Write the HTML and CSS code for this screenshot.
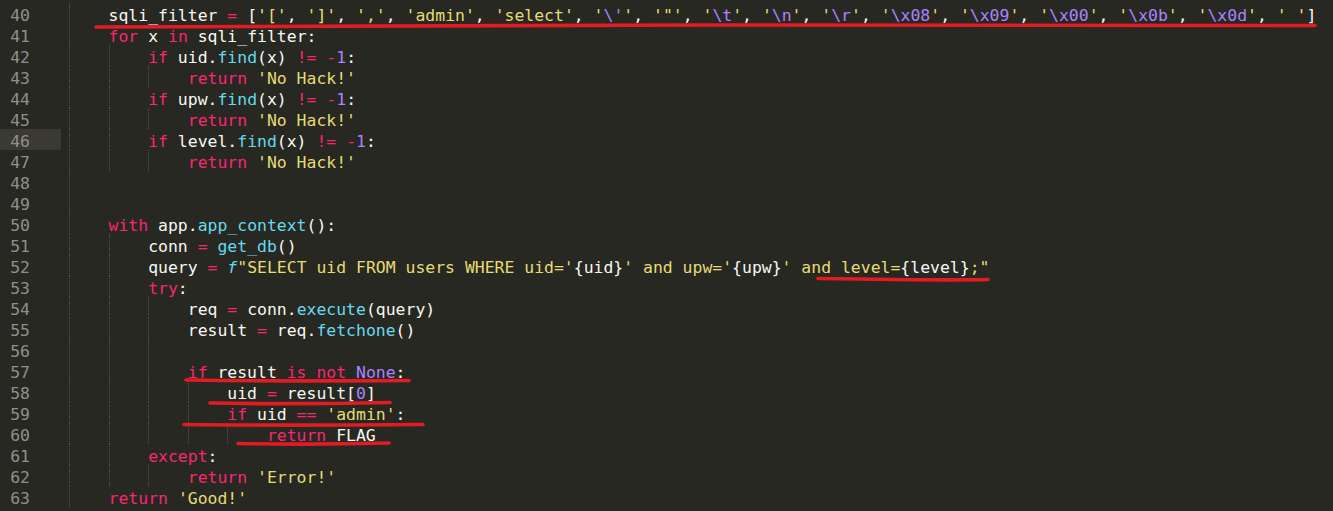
FILE: index.html
```html
<!DOCTYPE html>
<html lang="en">
<head>
<meta charset="utf-8">
<title>app.py</title>
<link rel="stylesheet" href="styles.css">
</head>
<body>
<div class="editor">
  <div class="row"><span class="ln">40</span><span class="g"></span><span class="t">sqli_filter <span class="k">=</span> [<span class="s">'['</span>, <span class="s">']'</span>, <span class="s">','</span>, <span class="s">'admin'</span>, <span class="s">'select'</span>, <span class="s">'<span class="n">\'</span>'</span>, <span class="s">'"'</span>, <span class="s">'<span class="n">\t</span>'</span>, <span class="s">'<span class="n">\n</span>'</span>, <span class="s">'<span class="n">\r</span>'</span>, <span class="s">'<span class="n">\x08</span>'</span>, <span class="s">'<span class="n">\x09</span>'</span>, <span class="s">'<span class="n">\x00</span>'</span>, <span class="s">'<span class="n">\x0b</span>'</span>, <span class="s">'<span class="n">\x0d</span>'</span>, <span class="s">' '</span>]</span></div>
  <div class="row"><span class="ln">41</span><span class="g"></span><span class="t"><span class="k">for</span> x <span class="k">in</span> sqli_filter:</span></div>
  <div class="row"><span class="ln">42</span><span class="g"></span><span class="g"></span><span class="t"><span class="k">if</span> uid.<span class="f">find</span>(x) <span class="k">!=</span> <span class="k">-</span><span class="n">1</span>:</span></div>
  <div class="row"><span class="ln">43</span><span class="g"></span><span class="g"></span><span class="g"></span><span class="t"><span class="k">return</span> <span class="s">'No Hack!'</span></span></div>
  <div class="row"><span class="ln">44</span><span class="g"></span><span class="g"></span><span class="t"><span class="k">if</span> upw.<span class="f">find</span>(x) <span class="k">!=</span> <span class="k">-</span><span class="n">1</span>:</span></div>
  <div class="row"><span class="ln">45</span><span class="g"></span><span class="g"></span><span class="g"></span><span class="t"><span class="k">return</span> <span class="s">'No Hack!'</span></span></div>
  <div class="row"><span class="ln cur">46</span><span class="g"></span><span class="g"></span><span class="t"><span class="k">if</span> level.<span class="f">find</span>(x) <span class="k">!=</span> <span class="k">-</span><span class="n">1</span>:</span></div>
  <div class="row"><span class="ln">47</span><span class="g"></span><span class="g"></span><span class="g"></span><span class="t"><span class="k">return</span> <span class="s">'No Hack!'</span></span></div>
  <div class="row"><span class="ln">48</span><span class="g"></span></div>
  <div class="row"><span class="ln">49</span><span class="g"></span></div>
  <div class="row"><span class="ln">50</span><span class="g"></span><span class="t"><span class="k">with</span> app.<span class="f">app_context</span>():</span></div>
  <div class="row"><span class="ln">51</span><span class="g"></span><span class="g"></span><span class="t">conn <span class="k">=</span> <span class="f">get_db</span>()</span></div>
  <div class="row"><span class="ln">52</span><span class="g"></span><span class="g"></span><span class="t">query <span class="k">=</span> <span class="i">f</span><span class="s">"SELECT uid FROM users WHERE uid='</span>{uid}<span class="s">' and upw='</span>{upw}<span class="s">' and level=</span>{level}<span class="s">;"</span></span></div>
  <div class="row"><span class="ln">53</span><span class="g"></span><span class="g"></span><span class="t"><span class="k">try</span>:</span></div>
  <div class="row"><span class="ln">54</span><span class="g"></span><span class="g"></span><span class="g"></span><span class="t">req <span class="k">=</span> conn.<span class="f">execute</span>(query)</span></div>
  <div class="row"><span class="ln">55</span><span class="g"></span><span class="g"></span><span class="g"></span><span class="t">result <span class="k">=</span> req.<span class="f">fetchone</span>()</span></div>
  <div class="row"><span class="ln">56</span><span class="g"></span><span class="g"></span><span class="g"></span></div>
  <div class="row"><span class="ln">57</span><span class="g"></span><span class="g"></span><span class="g"></span><span class="t"><span class="k">if</span> result <span class="k">is</span> <span class="k">not</span> <span class="n">None</span>:</span></div>
  <div class="row"><span class="ln">58</span><span class="g"></span><span class="g"></span><span class="g"></span><span class="g"></span><span class="t">uid <span class="k">=</span> result[<span class="n">0</span>]</span></div>
  <div class="row"><span class="ln">59</span><span class="g"></span><span class="g"></span><span class="g"></span><span class="g"></span><span class="t"><span class="k">if</span> uid <span class="k">==</span> <span class="s">'admin'</span>:</span></div>
  <div class="row"><span class="ln">60</span><span class="g"></span><span class="g"></span><span class="g"></span><span class="g"></span><span class="g"></span><span class="t"><span class="k">return</span> FLAG</span></div>
  <div class="row"><span class="ln">61</span><span class="g"></span><span class="g"></span><span class="t"><span class="k">except</span>:</span></div>
  <div class="row"><span class="ln">62</span><span class="g"></span><span class="g"></span><span class="g"></span><span class="t"><span class="k">return</span> <span class="s">'Error!'</span></span></div>
  <div class="row"><span class="ln">63</span><span class="g"></span><span class="t"><span class="k">return</span> <span class="s">'Good!'</span></span></div>

  <svg class="marks" width="1333" height="511" viewBox="0 0 1333 511" aria-hidden="true">
    <path d="M96 27 C 160 25.5, 400 25, 700 25 S 1280 25.5, 1315 25.5"/>
    <path d="M818 278.5 C 880 279.5, 950 280.5, 988 279.5"/>
    <path d="M186 380 C 250 381, 350 381, 409 380.5"/>
    <path d="M210 403 C 260 404, 340 403.5, 390 402.5"/>
    <path d="M184 424.5 C 260 425.5, 360 425, 423 424.5"/>
    <path d="M238 443.5 C 290 444.5, 350 444, 389 443"/>
  </svg>
</div>
</body>
</html>
```

FILE: styles.css
```css
html, body {
  margin: 0;
  padding: 0;
  background: #272822;
  overflow: hidden;
}

.editor {
  position: relative;
  width: 1333px;
  height: 511px;
  padding-top: 3px;
  box-sizing: border-box;
  font-family: "DejaVu Sans Mono", "Liberation Mono", monospace;
  font-size: 16.45px;
  color: #f8f8f2;
}

.row {
  display: flex;
  height: 21px;
  white-space: pre;
}

.ln {
  flex: none;
  width: 61px;
  margin-right: 8px;
  box-sizing: border-box;
  padding: 4px 31px 0 0;
  line-height: 17px;
  text-align: right;
  color: #90908a;
}

.ln.cur {
  background: #3b3a32;
}

.g {
  flex: none;
  width: 4ch;
  box-sizing: border-box;
  border-left: 1px dotted #55564f;
}

.t {
  padding-top: 4px;
  line-height: 17px;
}

.k { color: #f92672; }
.s { color: #e6db74; }
.f { color: #66d9ef; }
.n { color: #ae81ff; }
.i { color: #66d9ef; font-style: italic; }

.marks {
  position: absolute;
  left: 0;
  top: 0;
  pointer-events: none;
}

.marks path {
  fill: none;
  stroke: #e31b23;
  stroke-width: 3.6;
  stroke-linecap: round;
}
```
